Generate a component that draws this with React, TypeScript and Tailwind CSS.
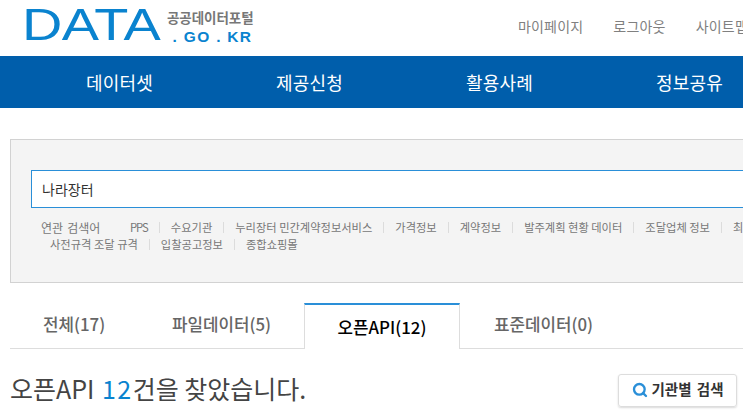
import { Search } from 'lucide-react';

const font = { fontFamily: '"Noto Sans CJK KR", "Liberation Sans", sans-serif' };

const navItems = ['데이터셋', '제공신청', '활용사례', '정보공유'];
const topLinks = ['마이페이지', '로그아웃', '사이트맵'];
const firstRow = ['PPS', '수요기관', '누리장터 민간계약정보서비스', '가격정보', '계약정보', '발주계획 현황 데이터', '조달업체 정보', '최종낙찰자'];
const secondRow = ['사전규격 조달 규격', '입찰공고정보', '종합쇼핑몰'];

const KeywordRow = ({ items }: { items: string[] }) => (
  <ul className="flex whitespace-nowrap">
    {items.map((item, index) => (
      <li key={item} className="flex items-center">
        {index > 0 && <span className="mx-[11px] h-[11px] w-px bg-[#dcdcdc]" />}
        <span className={item === 'PPS' ? 'tracking-[-1px]' : ''}>{item}</span>
      </li>
    ))}
  </ul>
);

export default function App() {
  return (
    <div className="h-[414px] w-[743px] overflow-hidden bg-white" style={font}>
      <header className="flex h-[56px] w-[900px] items-center justify-between">
        <div className="ml-[22px] flex items-center">
          <span className="block w-[139px] origin-left scale-x-[1.27] pb-[6px] text-[44px] leading-[50px] tracking-[-0.5px] text-[#0a83cf]" style={{ fontFamily: '"Liberation Sans", sans-serif' }}>
            DATA
          </span>
          <div className="ml-[6px] flex flex-col pb-[2px]">
            <span className="text-[13.5px] leading-[15px] font-bold tracking-[-0.05px] text-[#777777]">공공데이터포털</span>
            <span className="mt-[4px] text-[15.5px] leading-[16px] font-bold tracking-[1.3px] whitespace-nowrap text-[#0a83cf]" style={{ fontFamily: '"Liberation Sans", sans-serif' }}>&nbsp;. GO . KR</span>
          </div>
        </div>
        <nav className="flex gap-[30px] pr-[152px] pb-[4px] text-[14px] tracking-[0.2px] text-[#808080]">
          {topLinks.map((link) => (
            <span key={link}>{link}</span>
          ))}
        </nav>
      </header>

      <nav className="flex h-[52px] w-[900px] items-center bg-[#005eab] pl-[86px] text-[18px] tracking-[0.2px] text-white">
        {navItems.map((item) => (
          <span key={item} className="w-[190px]">{item}</span>
        ))}
      </nav>

      <section className="mt-[31px] ml-[10px] h-[144px] w-[1000px] border border-[#d2d2d2] bg-[#f4f4f4] px-[20px] pt-[30px]">
        <div className="flex h-[38px] items-center border border-[#2a8fd8] bg-white pl-[10px] text-[14px] text-[#333333]">나라장터</div>
        <div className="mt-[11px] text-[11.25px] leading-[17px] text-[#777777]">
          <div className="flex">
            <span className="ml-[10px] w-[89px] text-[12px] [word-spacing:1.5px]">연관 검색어</span>
            <KeywordRow items={firstRow} />
          </div>
          <div className="ml-[19px]">
            <KeywordRow items={secondRow} />
          </div>
        </div>
      </section>

      <div className="mt-[20px] ml-[10px] flex h-[46px] w-[900px] items-stretch text-[16.85px] font-medium text-[#666666]">
        <div className="flex w-[294px] items-center border-b border-[#dddddd] pb-[4px] pl-[33px]">
          <span className="w-[129px]">전체(17)</span>
          <span>파일데이터(5)</span>
        </div>
        <div className="flex w-[156px] items-center justify-center border-x border-t-2 border-[#dddddd] border-t-[#2a8fd8] text-black">
          오픈API(12)
        </div>
        <div className="flex flex-1 items-center border-b border-[#dddddd] pb-[4px] pl-[34px]">표준데이터(0)</div>
      </div>

      <div className="flex items-center justify-between pt-[24px] pr-[6px] pl-[10px]">
        <h2 className="pb-[4px] text-[25px] leading-[30px] text-[#444444]">
          오픈API <span className="ml-[2px] tracking-[1.5px] text-[#0a83cf]">12</span>건을 찾았습니다.
        </h2>
        <button className="flex h-[33px] w-[119px] items-center justify-center gap-[4px] rounded-[3px] border border-[#dddddd] pb-[2px] text-[14.5px] font-bold text-[#333333] shadow-[0_1px_2px_rgba(0,0,0,0.15)]">
          <Search className="mt-[2px] h-[16px] w-[16px] text-[#2a8fd8]" strokeWidth={3.5} />
          <span className="[word-spacing:2px]">기관별 검색</span>
        </button>
      </div>
    </div>
  );
}
